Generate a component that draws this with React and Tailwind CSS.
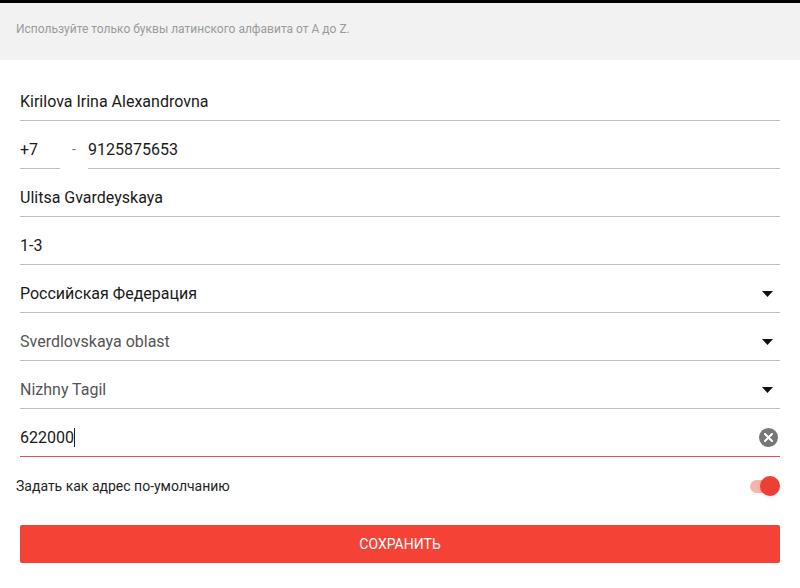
import React from 'react';

const font = { fontFamily: 'Roboto, "Noto Sans", sans-serif' };

const Caret = () => (
    <svg width="11" height="6" viewBox="0 0 11 6" className="shrink-0">
        <path d="M0 0 L11 0 L5.5 6 Z" fill="#111" />
    </svg>
);

const Field = ({ value, muted, select }) => (
    <div className="h-12 flex items-center justify-between border-b border-[#bdbdbd] pr-[7px] pt-[10px]">
        <span className={`text-[16px] ${muted ? 'text-[#555]' : 'text-[#1a1a1a]'}`}>{value}</span>
        {select && <Caret />}
    </div>
);

export default function App() {
    return (
        <div className="w-[800px] h-[588px] bg-white overflow-hidden" style={font}>
            <div className="h-[3px] bg-black" />
            <div className="h-[57px] bg-[#f2f2f2] px-4 pt-[17px] text-[12px] text-[#9a9a9a]">
                Используйте только буквы латинского алфавита от A до Z.
            </div>

            <div className="px-5 pt-[13px]">
                <Field value="Kirilova Irina Alexandrovna" />
                <div className="h-12 flex">
                    <div className="w-10 h-full flex items-center border-b border-[#bdbdbd] pt-[10px] text-[16px] text-[#1a1a1a]">+7</div>
                    <div className="w-7 h-full flex items-center justify-center pt-[8px] text-[14px] text-[#777]">-</div>
                    <div className="flex-1 h-full flex items-center border-b border-[#bdbdbd] pt-[10px] text-[16px] text-[#1a1a1a]">9125875653</div>
                </div>
                <Field value="Ulitsa Gvardeyskaya" />
                <Field value="1-3" />
                <Field value="Российская Федерация" select />
                <Field value="Sverdlovskaya oblast" muted select />
                <Field value="Nizhny Tagil" muted select />
                <div className="h-12 flex items-center justify-between border-b border-[#d9534f] pt-[10px] pr-[2px]">
                    <span className="text-[16px] text-[#1a1a1a] flex items-center">
                        622000<span className="inline-block w-[1px] h-[19px] bg-[#222]" />
                    </span>
                    <div className="w-[19px] h-[19px] rounded-full bg-[#777] flex items-center justify-center">
                        <svg width="9" height="9" viewBox="0 0 9 9">
                            <path d="M1 1 L8 8 M8 1 L1 8" stroke="white" strokeWidth="2" strokeLinecap="round" />
                        </svg>
                    </div>
                </div>
            </div>

            <div className="pl-4 pr-5 h-[58px] flex items-center justify-between">
                <span className="text-[14px] text-[#1f1f1f]">Задать как адрес по-умолчанию</span>
                <div className="relative w-[30px] h-[20px] flex items-center">
                    <div className="w-[26px] h-[13px] rounded-full bg-[#f7b3ae]" />
                    <div className="absolute right-0 w-[20px] h-[20px] rounded-full bg-[#ef3e33] shadow-sm" />
                </div>
            </div>

            <div className="px-5 pt-[10px]">
                <button className="w-full h-[38px] rounded-[2px] bg-[#f44336] text-white text-[14px] flex items-center justify-center">
                    СОХРАНИТЬ
                </button>
            </div>
        </div>
    );
}
